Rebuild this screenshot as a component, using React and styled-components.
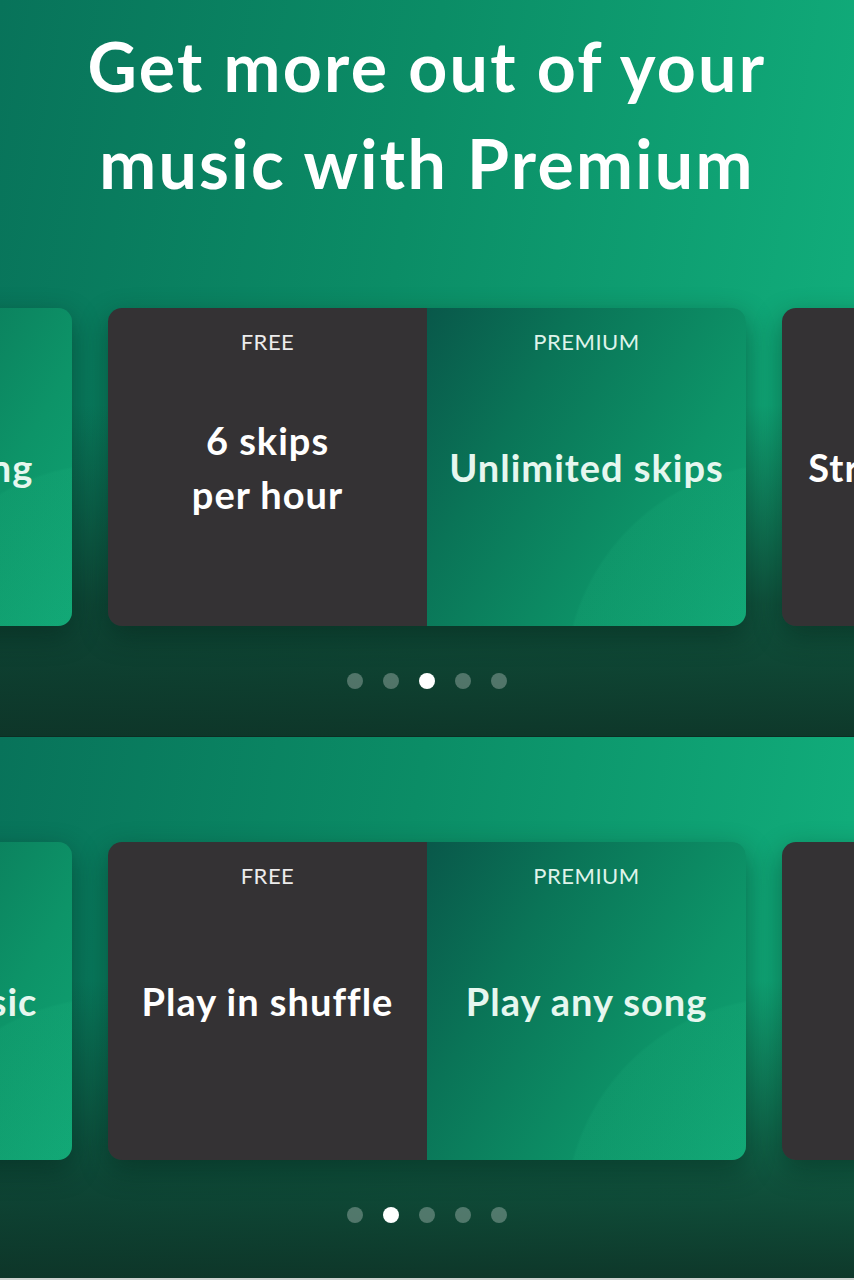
import React from "react";
import styled, { createGlobalStyle } from "styled-components";

const Global = createGlobalStyle`
  html, body { margin: 0; padding: 0; background: #cfd3d1; }
  body { font-family: Lato, "Noto Sans", sans-serif; -webkit-font-smoothing: antialiased; }
  * { box-sizing: border-box; }
`;

const Page = styled.div`
  width: 854px;
  display: flex;
  flex-direction: column;
  overflow: hidden;
`;

const Panel = styled.section`
  height: ${(p) => p.$h}px;
  padding-top: ${(p) => p.$top}px;
  display: flex;
  flex-direction: column;
  align-items: center;
  background:
    linear-gradient(180deg, rgba(14, 48, 38, 0) ${(p) => p.$fade}%, rgba(15, 52, 40, 0.75) 82%, rgba(14, 50, 38, 0.95) 100%),
    linear-gradient(100deg, #08735a 0%, #0b8d66 45%, #12b27e 100%);
  border-bottom: ${(p) => (p.$line ? "1px solid #0c2d23" : "none")};
`;

const Title = styled.h1`
  margin: 0;
  width: 100%;
  text-align: center;
  color: #ffffff;
  font-family: Lato, "Noto Sans", sans-serif;
  font-weight: 700;
  font-size: 68px;
  line-height: 97px;
  letter-spacing: 2.3px;
  padding-top: 17px;
  height: 308px;
`;

const Track = styled.div`
  width: 854px;
  display: flex;
  justify-content: center;
  gap: 36px;
`;

const Card = styled.div`
  flex: 0 0 638px;
  height: 318px;
  display: grid;
  grid-template-columns: 319px 319px;
  border-radius: 14px;
  overflow: hidden;
  box-shadow: 0 10px 28px rgba(4, 30, 22, 0.45);
`;

const Half = styled.div`
  position: relative;
  display: flex;
  align-items: center;
  justify-content: center;
  text-align: center;
  padding: 0 12px;
  background: ${(p) =>
    p.$premium
      ? `radial-gradient(circle at 112% 118%, rgba(40, 200, 140, 0.1) 0 42%, transparent 42.5%),
         linear-gradient(120deg, #09584a 0%, #0a7457 30%, #0d9468 70%, #10a574 100%)`
      : "#343234"};
`;

const Label = styled.span`
  position: absolute;
  top: 21px;
  left: 0;
  right: 0;
  font-family: Lato, "Noto Sans", sans-serif;
  font-size: 22px;
  line-height: 26px;
  font-weight: 400;
  letter-spacing: 0.5px;
  color: ${(p) => (p.$premium ? "#dff3ea" : "#ececec")};
`;

const Feature = styled.span`
  font-family: Lato, "Noto Sans", sans-serif;
  font-size: 38px;
  font-weight: 700;
  line-height: 54px;
  letter-spacing: 1px;
  color: ${(p) => (p.$premium ? "#e6f7ef" : "#ffffff")};
  white-space: pre-line;
`;

const Dots = styled.div`
  display: flex;
  gap: 20px;
  margin-top: 47px;
`;

const Dot = styled.span`
  width: 16px;
  height: 16px;
  border-radius: 50%;
  background: ${(p) => (p.$on ? "#ffffff" : "rgba(255, 255, 255, 0.28)")};
`;

// One slide per free/premium pair; the carousel shows the active one with its neighbours peeking in.
const SLIDES = [
  ["Ad breaks", "Ad-free music"],
  ["Play in shuffle", "Play any song"],
  ["6 skips\nper hour", "Unlimited skips"],
  ["Streaming only", "Download music"],
  ["Basic audio", "High quality audio"],
];

function Compare({ free, premium }) {
  return (
    <Card>
      <Half>
        <Label>FREE</Label>
        <Feature>{free}</Feature>
      </Half>
      <Half $premium>
        <Label $premium>PREMIUM</Label>
        <Feature $premium>{premium}</Feature>
      </Half>
    </Card>
  );
}

function Carousel({ active }) {
  const visible = [active - 1, active, active + 1];
  return (
    <>
      <Track>
        {visible.map((i) => (
          <Compare key={i} free={SLIDES[i][0]} premium={SLIDES[i][1]} />
        ))}
      </Track>
      <Dots>
        {SLIDES.map((_, i) => (
          <Dot key={i} $on={i === active} />
        ))}
      </Dots>
    </>
  );
}

export default function App() {
  return (
    <Page>
      <Global />
      <Panel $h={737} $top={0} $fade={55} $line>
        <Title>
          Get more out of your
          <br />
          music with Premium
        </Title>
        <Carousel active={2} />
      </Panel>
      <Panel $h={541} $top={105} $fade={45}>
        <Carousel active={1} />
      </Panel>
    </Page>
  );
}
